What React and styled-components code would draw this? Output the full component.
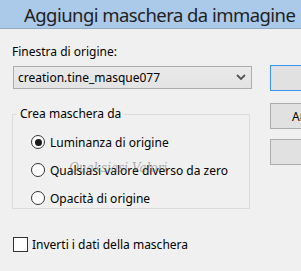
import React from "react";
import styled, { createGlobalStyle } from "styled-components";

const GlobalStyle = createGlobalStyle`
  html, body {
    margin: 0;
    padding: 0;
    width: 301px;
    height: 271px;
    overflow: hidden;
    background: #f0f0f0;
  }
  body {
    font-family: "Noto Sans", "Open Sans", sans-serif;
    font-size: 12px;
    color: #000;
  }
`;

const Window = styled.div`
  display: flex;
  flex-direction: column;
  width: 301px;
  height: 271px;
  overflow: hidden;
  background: #f0f0f0;
`;

const TitleBar = styled.div`
  height: 28px;
  background: #abc9e9;
  border-bottom: 1px solid #92a9c4;
  display: flex;
  align-items: center;
  padding-left: 24px;
  font-size: 18.5px;
  letter-spacing: -0.55px;
  color: #1f1f1f;
  white-space: nowrap;
  box-sizing: content-box;
`;

const Body = styled.div`
  display: grid;
  grid-template-columns: 240px 76px;
  column-gap: 18px;
  padding: 13px 0 0 12px;
`;

const Left = styled.div`
  display: flex;
  flex-direction: column;
`;

const Right = styled.div`
  display: flex;
  flex-direction: column;
  padding-top: 23px;
`;

const Label = styled.div`
  line-height: 16px;
  height: 16px;
  padding-top: 2px;
`;

const Combo = styled.div`
  margin: 6px 0 0 1px;
  height: 21px;
  border: 1px solid #adadad;
  background: linear-gradient(#eaeaea, #e3e3e3);
  display: flex;
  align-items: center;
  justify-content: space-between;
  padding: 0 4px 0 4px;
  white-space: nowrap;
`;

const Chevron = styled.svg`
  width: 10px;
  height: 7px;
  margin-right: 1px;
`;

const Group = styled.fieldset`
  margin: 17px 2px 0 0;
  padding: 6px 0 0 4px;
  height: 103px;
  border: 1px solid #dcdcdc;
  box-sizing: border-box;
  min-width: 0;
`;

const Legend = styled.legend`
  padding: 0 3px;
  line-height: 16px;
`;

const RadioRow = styled.label`
  position: relative;
  display: flex;
  align-items: center;
  gap: 5px;
  height: 28px;
  padding-left: 14px;
  white-space: nowrap;
`;

const RadioCircle = styled.span`
  width: 14px;
  height: 14px;
  box-sizing: border-box;
  border-radius: 50%;
  border: 1px solid #333;
  background: #fff;
  display: flex;
  align-items: center;
  justify-content: center;
  &::after {
    content: "";
    width: 7px;
    height: 7px;
    border-radius: 50%;
    background: ${(p) => (p.checked ? "#1b1b1b" : "transparent")};
  }
`;

const Watermark = styled.span`
  position: absolute;
  left: 52px;
  top: 5px;
  font-family: "DejaVu Serif", serif;
  font-style: italic;
  font-size: 12px;
  color: rgba(110, 110, 110, 0.55);
  pointer-events: none;
`;

const CheckRow = styled.label`
  display: flex;
  align-items: center;
  gap: 4px;
  margin: 27px 0 0 1px;
  white-space: nowrap;
`;

const CheckBox = styled.span`
  width: 15px;
  height: 15px;
  box-sizing: border-box;
  border: 1px solid #333;
  background: #fff;
`;

const Button = styled.div`
  height: 26px;
  box-sizing: border-box;
  border: 1px solid ${(p) => (p.focused ? "#3b94ef" : "#adadad")};
  background: #e1e1e1;
  margin-bottom: ${(p) => p.gap}px;
  display: flex;
  align-items: center;
  padding-left: 21px;
  white-space: nowrap;
`;

export default function App() {
  return (
    <Window>
      <GlobalStyle />
      <TitleBar>Aggiungi maschera da immagine</TitleBar>
      <Body>
        <Left>
          <Label>Finestra di origine:</Label>
          <Combo>
            <span>creation.tine_masque077</span>
            <Chevron viewBox="0 0 10 7">
              <path d="M1 1 L5 5 L9 1" fill="none" stroke="#555" strokeWidth="1.8" />
            </Chevron>
          </Combo>
          <Group>
            <Legend>Crea maschera da</Legend>
            <RadioRow>
              <RadioCircle checked />
              Luminanza di origine
            </RadioRow>
            <RadioRow>
              <RadioCircle />
              Qualsiasi valore diverso da zero
              <Watermark>Quaksiasi Valori</Watermark>
            </RadioRow>
            <RadioRow>
              <RadioCircle />
              Opacità di origine
            </RadioRow>
          </Group>
          <CheckRow>
            <CheckBox />
            Inverti i dati della maschera
          </CheckRow>
        </Left>
        <Right>
          <Button focused gap={12} />
          <Button gap={10}>Annulla</Button>
          <Button gap={0} />
        </Right>
      </Body>
    </Window>
  );
}
